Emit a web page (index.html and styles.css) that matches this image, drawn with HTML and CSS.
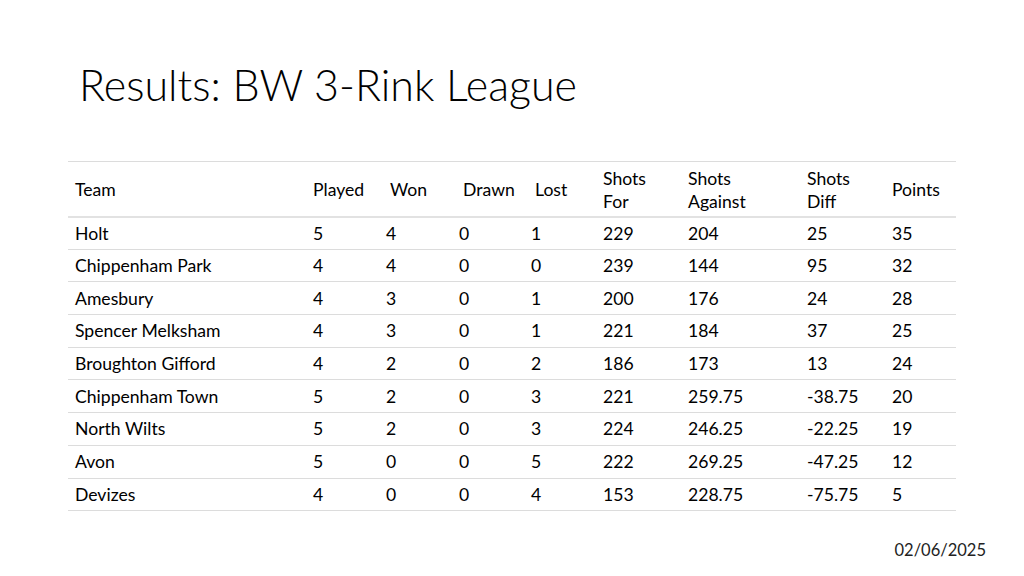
FILE: index.html
```html
<!DOCTYPE html>
<html lang="en">
<head>
<meta charset="utf-8">
<title>Results: BW 3-Rink League</title>
<link rel="stylesheet" href="styles.css">
</head>
<body>
<div class="slide">
  <h1 class="title">Results: BW 3-Rink League</h1>
  <table class="league">
    <colgroup>
      <col class="c-team"><col class="c-played"><col class="c-won"><col class="c-drawn"><col class="c-lost"><col class="c-for"><col class="c-against"><col class="c-diff"><col class="c-points">
    </colgroup>
    <thead>
      <tr>
        <th>Team</th><th>Played</th><th class="sh">Won</th><th class="sh">Drawn</th><th class="sh">Lost</th><th>Shots<br>For</th><th>Shots<br>Against</th><th>Shots<br>Diff</th><th>Points</th>
      </tr>
    </thead>
    <tbody>
      <tr><td>Holt</td><td>5</td><td>4</td><td>0</td><td>1</td><td>229</td><td>204</td><td>25</td><td>35</td></tr>
      <tr><td>Chippenham Park</td><td>4</td><td>4</td><td>0</td><td>0</td><td>239</td><td>144</td><td>95</td><td>32</td></tr>
      <tr><td>Amesbury</td><td>4</td><td>3</td><td>0</td><td>1</td><td>200</td><td>176</td><td>24</td><td>28</td></tr>
      <tr><td>Spencer Melksham</td><td>4</td><td>3</td><td>0</td><td>1</td><td>221</td><td>184</td><td>37</td><td>25</td></tr>
      <tr><td>Broughton Gifford</td><td>4</td><td>2</td><td>0</td><td>2</td><td>186</td><td>173</td><td>13</td><td>24</td></tr>
      <tr><td>Chippenham Town</td><td>5</td><td>2</td><td>0</td><td>3</td><td>221</td><td>259.75</td><td>-38.75</td><td>20</td></tr>
      <tr><td>North Wilts</td><td>5</td><td>2</td><td>0</td><td>3</td><td>224</td><td>246.25</td><td>-22.25</td><td>19</td></tr>
      <tr><td>Avon</td><td>5</td><td>0</td><td>0</td><td>5</td><td>222</td><td>269.25</td><td>-47.25</td><td>12</td></tr>
      <tr><td>Devizes</td><td>4</td><td>0</td><td>0</td><td>4</td><td>153</td><td>228.75</td><td>-75.75</td><td>5</td></tr>
    </tbody>
  </table>
  <div class="date">02/06/2025</div>
</div>
</body>
</html>
```
FILE: styles.css
```css
html, body {
  margin: 0;
  padding: 0;
  background: #ffffff;
}
.slide {
  width: 1024px;
  height: 576px;
  position: relative;
  font-family: Lato, "Open Sans", sans-serif;
  color: #000;
  overflow: hidden;
}
.title {
  margin: 0;
  padding: 59px 0 0 79px;
  font-weight: 300;
  font-size: 43px;
  line-height: 52px;
  height: 103px;
  box-sizing: border-box;
}
.league {
  margin: 58px 0 0 68px;
  width: 888px;
  border-collapse: collapse;
  font-size: 17.6px;
  table-layout: fixed;
}
.c-team { width: 238px; }
.c-played { width: 73px; }
.c-won { width: 73px; }
.c-drawn { width: 72px; }
.c-lost { width: 72px; }
.c-for { width: 85px; }
.c-against { width: 119px; }
.c-diff { width: 85px; }
.c-points { width: 71px; }
.league th, .league td {
  text-align: left;
  padding: 0 7px;
  font-weight: 400;
  vertical-align: middle;
}
.league thead tr {
  height: 55px;
  border-top: 1px solid #dcdcdc;
  border-bottom: 2px solid #e2e2e2;
}
.league th {
  line-height: 23px;
  padding-top: 2px;
}
.league th.sh {
  padding-left: 11px;
}
.league tbody tr {
  height: 32.7px;
  border-bottom: 1px solid #dcdcdc;
}
.date {
  position: absolute;
  right: 38px;
  top: 540px;
  font-size: 16.5px;
  color: #222;
}
```
